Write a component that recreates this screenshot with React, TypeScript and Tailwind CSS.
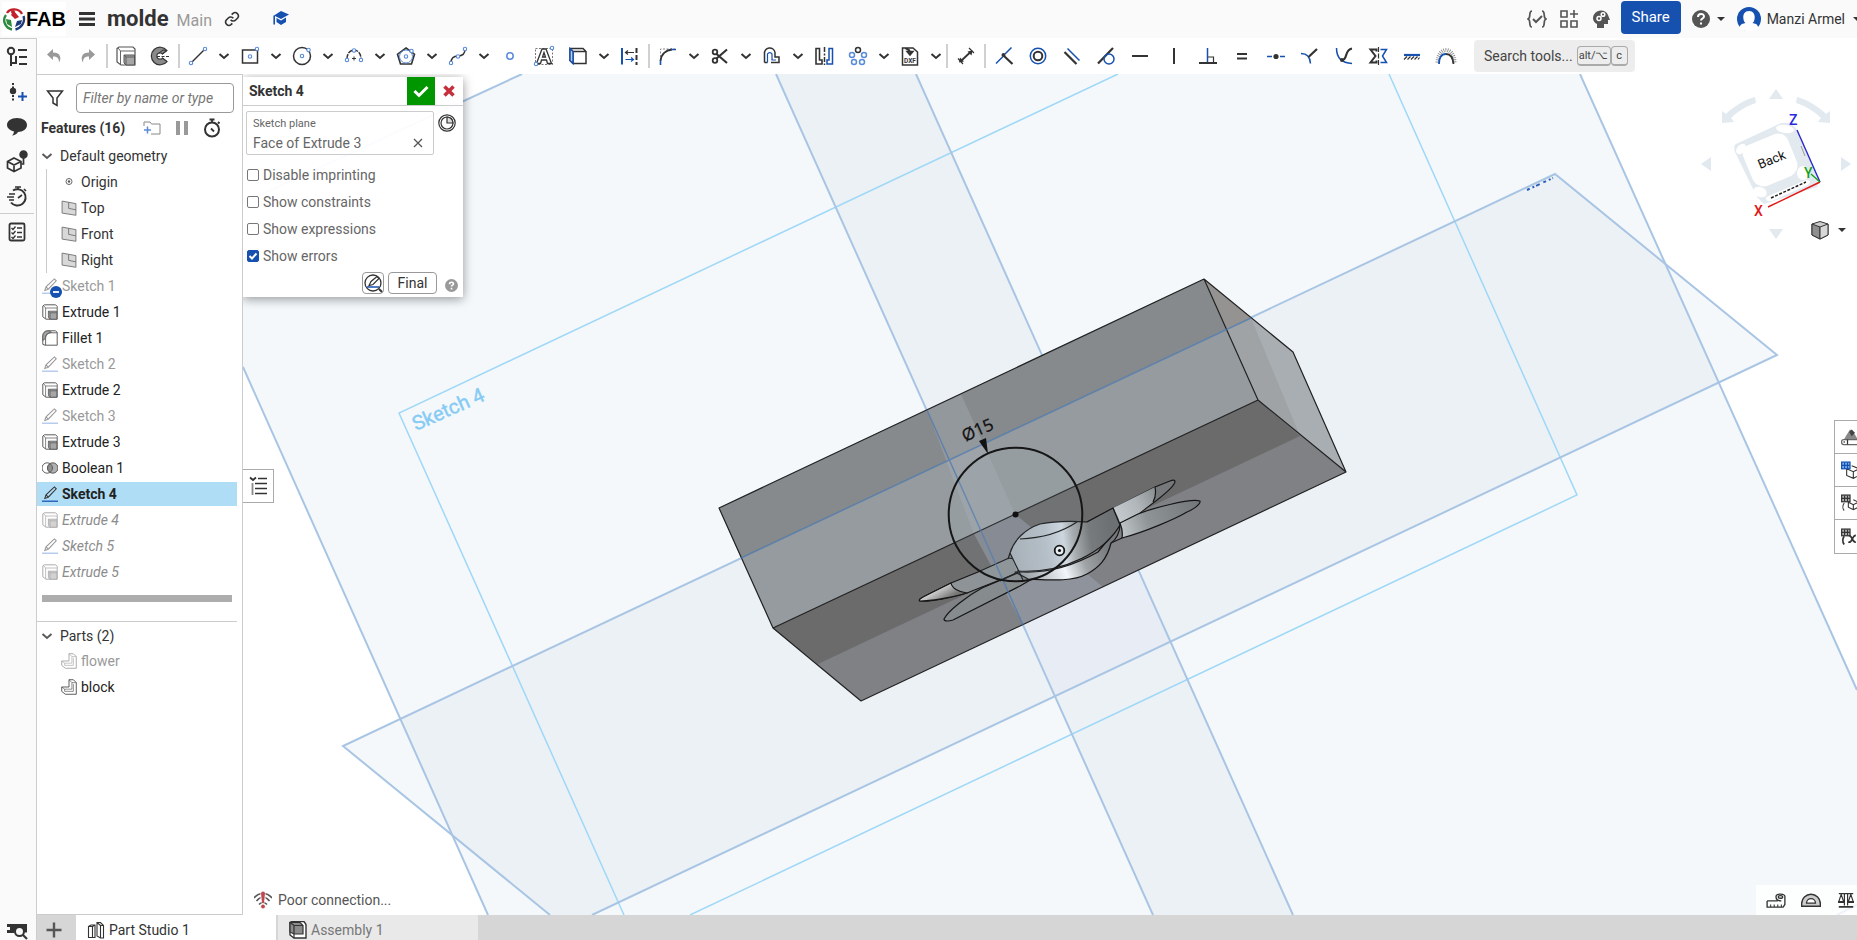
import React from 'react';

type IconProps = { children: React.ReactNode; className?: string; box?: string };

function Icon({ children, className = 'size-6', box = '0 0 24 24' }: IconProps) {
  return (
    <svg viewBox={box} className={`shrink-0 ${className}`} fill="none" stroke="#333" strokeWidth="1.5" aria-hidden="true">
      {children}
    </svg>
  );
}

const BLUE = '#1651b0';
const SOFT = '#5a8bd8';

/* ---------- feature glyphs ---------- */

function ExtrudeGlyph() {
  return (
    <g stroke="#555">
      <path d="M3 4.500 5 3h14l2 2v16H7l-4-3z" fill="#fff" strokeWidth="1.200" />
      <path d="M6.500 20.500V7h14M6.500 7 4 4" strokeWidth="0.900" />
      <path d="M10 11h10.500v10H12l-2-2z" fill="#a6a6a6" strokeWidth="1" />
      <path d="M10 11l2 2h8.500M12 13v8" strokeWidth="0.900" />
    </g>
  );
}

function PencilGlyph({ line = '#a9c3e6' }: { line?: string }) {
  return (
    <>
      <path d="M5.500 17.500 7 13 17.500 3.200l2.300 2.300L9.800 16z M7 13l2.800 3" strokeWidth="1.300" />
      <path d="M2 21h20" stroke={line} strokeWidth="1.600" />
    </>
  );
}

function FilletGlyph() {
  return (
    <g stroke="#555">
      <path d="M3 20V9c0-3 2-6 6-6h10l2 2v16H6z" fill="#fff" strokeWidth="1.200" />
      <path d="M3 11c0-5 3-8 8-8l3 2c-5 0-8 3-8 8l-3 2z" fill="#a6a6a6" strokeWidth="1" />
      <path d="M6.500 21v-8c0-5 3-7.500 7.500-7.500h7" strokeWidth="1.100" />
    </g>
  );
}

function BooleanGlyph() {
  return (
    <g stroke="#555">
      <circle cx="8.500" cy="12" r="6.500" strokeWidth="1.200" />
      <circle cx="15.500" cy="12" r="6.500" fill="#b0b0b0" strokeWidth="1.200" />
      <path d="M12 6.500a6.500 6.500 0 0 1 0 11 6.500 6.500 0 0 1 0-11z" fill="#909090" strokeWidth="1.200" />
    </g>
  );
}

function PlaneGlyph() {
  return (
    <>
      <path d="M2 2.500 21 6v16L2 19z" fill="#d8d8d8" stroke="#777" strokeWidth="1.300" />
      <path d="M11 4v8.500l10 2" stroke="#777" strokeWidth="1.300" />
    </>
  );
}

function PartGlyph() {
  return (
    <g stroke="#555">
      <path d="M12 2h6l4 4v16H7l-5-4v-6h10z" fill="#fff" strokeWidth="1.300" />
      <path d="M12 2l4 4h6M16 6v9H6l-4-3M6 15v3h12V8" strokeWidth="0.900" />
    </g>
  );
}

/* ---------- toolbar ---------- */

type Tool = { name: string; glyph?: React.ReactNode; menu?: boolean; sep?: boolean };

const pt = (x: number, y: number, c = SOFT) => <circle cx={x} cy={y} r="1.7" stroke={c} strokeWidth="1.1" fill="#fff" />;

const tools: Tool[] = [
  { name: 'Undo', glyph: <path d="M11 5 5 10.500 11 16v-3.500c4 0 6 1.500 6 6 3-5 1-10-6-10z" fill="#999" stroke="none" /> },
  { name: 'Redo', glyph: <path d="M13 5l6 5.500L13 16v-3.500c-4 0-6 1.500-6 6-3-5-1-10 6-10z" fill="#999" stroke="none" /> },
  { name: 's1', sep: true },
  { name: 'Extrude', glyph: <ExtrudeGlyph /> },
  {
    name: 'Revolve',
    glyph: (
      <>
        <path d="M19 6.500A8.800 8.800 0 1 0 19 17.500L14.500 14a3.200 3.200 0 1 1 0-4z" fill="#8a8a8a" strokeWidth="1.200" />
        <path d="M19 6.500 15 6l-4 3M14.500 10 19 6.500M14.500 14l4.500 3.500" strokeWidth="1" />
        <path d="M9 12.500h13" strokeDasharray="3 1.500" strokeWidth="1.200" />
      </>
    ),
  },
  { name: 's2', sep: true },
  { name: 'Line', menu: true, glyph: <><path d="M5 19 19 5" />{pt(5, 19)}{pt(19, 5)}</> },
  { name: 'Rectangle', menu: true, glyph: <><path d="M4.500 6h15v13h-15z" />{pt(19, 5)}{pt(12, 12.500)}</> },
  { name: 'Circle', menu: true, glyph: <><circle cx="12" cy="12" r="8.500" />{pt(18.500, 6)}{pt(12, 12)}</> },
  { name: 'Arc', menu: true, glyph: <><path d="M5 15C5 3 19 3 19 15" strokeDasharray="5 1" />{pt(5, 16)}{pt(19, 16)}{pt(12, 6.500)}<path d="M12 12.500v4M10 14.500h4" strokeWidth="1" /></> },
  { name: 'Polygon', menu: true, glyph: <><path d="M12 4l8.500 6.200L17.500 20h-11L3.500 10.200z" strokeWidth="1.600" /><circle cx="12" cy="12.500" r="6.500" stroke={SOFT} strokeWidth="1" />{pt(12, 12.500)}{pt(17.500, 7)}</> },
  { name: 'Spline', menu: true, glyph: <><path d="M5 19c0-6 4-7 7-7s7-1 7-7" />{pt(5, 19)}{pt(12, 12.500)}{pt(19, 5)}</> },
  { name: 'Point', glyph: <circle cx="12" cy="12" r="3.200" stroke={SOFT} /> },
  {
    name: 'Text',
    glyph: (
      <>
        <path d="M3.500 4.500h17v16h-17z" strokeDasharray="2 1.500" strokeWidth="1" stroke="#777" />
        <path d="M4.500 19.500 10 5h4l5.500 14.500h-4l-1-3.500h-5l-1 3.500zM10.500 13h3L12 8.500z" fill="#fff" strokeWidth="1.300" />
        {pt(4, 20)}{pt(20, 4)}
      </>
    ),
  },
  { name: 'Use', menu: true, glyph: <><path d="M4 4.500h13l3 3v12H7l-3-3zM4 4.500l3 3h13M7 7.500v12" /><path d="M4 4.500l3 3v12l-3-3z" fill="#b9cff0" stroke={BLUE} /></> },
  { name: 'Construction', glyph: <><path d="M4 4v16.500" stroke={BLUE} strokeWidth="2" /><path d="M18.500 4v17" strokeWidth="2" strokeDasharray="5 2" /><path d="M8 8.500h8M10 6.500l-2.500 2 2.500 2" strokeWidth="1.200" /><path d="M7.500 15.500H15M13 13.500l2.500 2-2.500 2" stroke={BLUE} strokeWidth="1.200" /></> },
  { name: 's3', sep: true },
  { name: 'Fillet', menu: true, glyph: <><path d="M4.500 20V5H19" stroke="#888" strokeWidth="1" strokeDasharray="2 1.500" /><path d="M4.500 17C5 10 10 6 16 5.500" strokeWidth="1.800" /><path d="M4.500 16.500V21M15 5.500h5" stroke={BLUE} strokeWidth="1.600" /></> },
  { name: 'Trim', menu: true, glyph: <><circle cx="7" cy="8" r="2.300" strokeWidth="1.800" /><circle cx="7" cy="16.500" r="2.300" strokeWidth="1.800" /><path d="M8.500 10 19 19M8.500 14.500 19 5.500" strokeWidth="2.200" /></> },
  { name: 'Offset', menu: true, glyph: <><path d="M4.500 18.500V10a5 5 0 0 1 10.500-1.500V13h4v5.500H11M4.500 18.500h3" /><path d="M7.500 18.500V10a2.500 2.500 0 0 1 4.500 0V16h4" stroke={BLUE} strokeWidth="1.200" /></> },
  { name: 'Mirror', glyph: <><path d="M4 4.500h3.500V16H10v4H4z" strokeWidth="1.600" /><path d="M12.500 3v18" strokeDasharray="5 1.500 2 1.500" /><path d="M20.500 4.500H17V16h-2v4h5.500z" stroke={BLUE} /></> },
  { name: 'Pattern', menu: true, glyph: <><circle cx="12" cy="6" r="2.500" /><g stroke={SOFT}><circle cx="6" cy="11" r="2.500" /><circle cx="18" cy="11" r="2.500" /><circle cx="8" cy="18" r="2.500" /><circle cx="16" cy="18" r="2.500" /></g></> },
  {
    name: 'Insert DXF',
    menu: true,
    glyph: (
      <>
        <path d="M4.500 4H15l4.500 4v13h-15z" />
        <path d="M7 4.500c4 0 5 1 5 4M9 7.500l3 3.500 3-3.500z" fill="#333" />
        <text x="12" y="19" textAnchor="middle" fontSize="6.500" fontWeight="700" fontFamily="Roboto, sans-serif" fill="#333" stroke="none">DXF</text>
      </>
    ),
  },
  { name: 's4', sep: true },
  { name: 'Dimension', glyph: <><path d="M7 17 16.500 8" strokeWidth="1.800" /><path d="M5 18.500l1-5 4 4zM18.500 6.500l-5 1 4 4z" fill="#333" stroke="none" /><path d="M4 14.500 9 20M15 4l5 5" strokeWidth="1.200" /></> },
  { name: 's5', sep: true },
  { name: 'Coincident', glyph: <><path d="M4 19.500l7-7M13 10l6.500-6.500" stroke={BLUE} /><path d="M11.500 11.500 20.500 20" strokeWidth="2.200" /><circle cx="11.500" cy="11" r="2" fill="#333" stroke="none" /></> },
  { name: 'Concentric', glyph: <><circle cx="12" cy="12" r="7.700" stroke={BLUE} /><circle cx="12" cy="12" r="4.300" strokeWidth="2" /></> },
  { name: 'Parallel', glyph: <><path d="M4.500 8l12 12" strokeWidth="2.200" /><path d="M7.500 4.500l12 12" stroke={BLUE} /></> },
  { name: 'Tangent', glyph: <><path d="M4 19.500 19 4" strokeWidth="2.200" /><circle cx="15" cy="15" r="5" stroke={BLUE} /></> },
  { name: 'Horizontal', glyph: <path d="M4 12h16" strokeWidth="2" /> },
  { name: 'Vertical', glyph: <path d="M12 4v16" strokeWidth="2" /> },
  { name: 'Perpendicular', glyph: <><path d="M11.500 4v14" stroke={BLUE} /><path d="M3 19h18" strokeWidth="2" /><path d="M12 13h5.500v5.500" strokeWidth="1.200" /></> },
  { name: 'Equal', glyph: <path d="M7 10h10M7 14.500h10" strokeWidth="2" /> },
  { name: 'Midpoint', glyph: <><path d="M3 12.500h5M16 12.500h5" stroke={BLUE} /><circle cx="12" cy="12.500" r="2.600" fill="#333" stroke="none" /></> },
  { name: 'Normal', glyph: <><path d="M3 9.500c5 0 9 2 9.500 10" stroke={BLUE} /><path d="M10.500 13 19 5" strokeWidth="2.200" /></> },
  { name: 'Pierce', glyph: <><path d="M4.500 4c0 9 5 15 15.500 15.500" stroke={BLUE} /><path d="M10 16c6 0 2-10 10-11.500" strokeWidth="2.200" /><circle cx="10" cy="16" r="2" fill="#333" stroke="none" /></> },
  { name: 'Symmetric', glyph: <><path d="M10.500 7.500v-2H4.500L9.500 12l-5 6.500h6v-2" strokeWidth="2" /><path d="M12.500 3v18" strokeDasharray="5 1.500" strokeWidth="1.200" /><path d="M14.500 5.500h6L16.500 12l4 6.500h-6" stroke={BLUE} /></> },
  { name: 'Fix', glyph: <><path d="M4 11h16" stroke={BLUE} strokeWidth="2.200" /><path d="M4 15.500l3-3M7.500 15.500l3-3M11 15.500l3-3M14.500 15.500l3-3M18 15.500l1.500-2" strokeWidth="1.200" /></> },
  { name: 'Curvature', glyph: <><path d="M3.500 18.500C4 2 20 2 20.500 18.500" stroke="#888" strokeWidth="4" strokeDasharray="0.800 1.200" /><path d="M5 20C5 14 7 10 12 10" stroke={BLUE} strokeWidth="1.800" /><path d="M12 10c5 0 7 4 7.500 10" strokeWidth="1.800" /></> },
];

function Chevron({ className = 'w-3 h-3' }: { className?: string }) {
  return (
    <Icon box="0 0 12 12" className={className}>
      <path d="M1.500 4 6 8l4.500-4" strokeWidth="2" />
    </Icon>
  );
}

function Toolbar() {
  return (
    <div className="flex h-9 items-center bg-white" role="toolbar">
      {tools.map((t) =>
        t.sep ? (
          <div key={t.name} className="flex w-1 shrink-0 justify-center">
            <div className="h-6 w-0.5 bg-[#d0d0d0]" />
          </div>
        ) : (
          <div key={t.name} className="flex shrink-0 items-center">
            <button aria-label={t.name} className="flex w-[34px] justify-center">
              <Icon>{t.glyph}</Icon>
            </button>
            {t.menu && (
              <button aria-label={`${t.name} options`} className="flex w-[18px] justify-center">
                <Chevron />
              </button>
            )}
          </div>
        ),
      )}
      <button className="ml-[11px] flex h-8 w-[161px] shrink-0 items-center rounded bg-[#ededed] pl-2.5 text-sm text-[#444]">
        Search tools...
        <kbd className="ml-1 flex h-5 w-[34px] items-center justify-center rounded-sm border border-b-2 border-[#aaa] font-[Roboto,sans-serif] text-[11px]">alt/⌥</kbd>
        <kbd className="flex h-5 w-[17px] items-center justify-center rounded-sm border border-b-2 border-[#aaa] font-[Roboto,sans-serif] text-[11px]">c</kbd>
      </button>
    </div>
  );
}

/* ---------- header ---------- */

function Header() {
  return (
    <header className="flex h-[38px] shrink-0 items-center bg-[#fafafa] text-[#333]">
      <div className="ml-0.5 flex h-[34px] w-16 items-center bg-white">
        <Icon className="size-6" box="0 0 24 24">
          <path d="M5 6C8 1 17 1 20 7" stroke="#c4202b" strokeWidth="2.400" />
          <path d="M9 8l3-4 5 6-4 2z" fill="#c4202b" stroke="none" />
          <circle cx="11" cy="5" r="2" fill="#c4202b" stroke="none" />
          <path d="M4 8C0 13 3 21 10 22.500" stroke="#2c8a3d" strokeWidth="2.400" />
          <path d="M4 12l5 1 1 7-5-3z" fill="#2c8a3d" stroke="none" />
          <path d="M21.500 9c2 6-2 12-8 13.500" stroke="#1d3a7a" strokeWidth="2.400" />
          <path d="M20 13l-5 1-2 6 6-3z" fill="#1d3a7a" stroke="none" />
        </Icon>
        <span className="font-['Liberation_Sans',sans-serif] text-[20px] leading-none font-bold text-black">FAB</span>
      </div>
      <button aria-label="Menu" className="ml-[13px] flex">
        <Icon className="h-4 w-4" box="0 0 16 16">
          <path d="M0 2.500h16M0 8h16M0 13.500h16" strokeWidth="3" />
        </Icon>
      </button>
      <h1 className="ml-3 text-[22px] leading-6 font-bold">molde</h1>
      <span className="ml-2 pt-1 text-base text-[#999]">Main</span>
      <button aria-label="Copy link" className="ml-3 flex">
        <Icon className="size-4" box="0 0 24 24">
          <path d="M10 13a5 5 0 0 0 7.500.5l3-3a5 5 0 0 0-7-7l-2 2M14 11a5 5 0 0 0-7.500-.5l-3 3a5 5 0 0 0 7 7l2-2" strokeWidth="2.400" />
        </Icon>
      </button>
      <button aria-label="Learning center" className="ml-[33px] flex">
        <Icon className="h-4 w-4" box="0 0 16 16">
          <path d="M8 0l8 3.500L8 8 1 4.500z" fill={BLUE} stroke="none" />
          <path d="M3.500 7 8 9.500 13 6.500V11l-5 3-4.500-3z" fill={BLUE} stroke="none" />
          <path d="M1.200 4.500v9" stroke={BLUE} strokeWidth="1.600" />
        </Icon>
      </button>
      <div className="ml-auto flex items-center">
        <button aria-label="Release candidates" className="mr-3 flex">
          <Icon className="size-5" box="0 0 20 20">
            <path d="M5 2C1 2 4.500 9 1 10c3.500 1 0 8 4 8M15 2c4 0 .5 7 4 8-3.500 1 0 8-4 8" stroke="#555" strokeWidth="1.700" />
            <path d="M6 10l3 3 6-6" stroke="#555" strokeWidth="2" />
          </Icon>
        </button>
        <button aria-label="Apps" className="mr-3 flex">
          <Icon className="size-5" box="0 0 20 20">
            <path d="M2 2h6v6H2zM2 12h6v6H2zM12 12h6v6h-6zM11 5h8M15 1v8" stroke="#555" strokeWidth="1.600" />
          </Icon>
        </button>
        <button aria-label="AI advisor" className="mr-2.5 flex">
          <Icon className="size-5" box="0 0 20 20">
            <path d="M6 19v-4C2 13 1 9 3 5.500 6 0 15 0 17 6l2 5h-2v4h-4v4z" fill="#555" stroke="none" />
            <circle cx="8" cy="9.500" r="2" stroke="#fff" />
            <circle cx="12" cy="5.500" r="1.800" stroke="#fff" />
          </Icon>
        </button>
        <button className="mb-1 h-[33px] w-[60px] rounded bg-[#1651b0] text-[15px] text-white">Share</button>
        <button aria-label="Help" className="ml-2.5 flex items-center">
          <Icon className="size-5" box="0 0 20 20">
            <circle cx="10" cy="10" r="9" fill="#555" stroke="none" />
            <path d="M7 8c0-4 6-4 6-.5 0 2-3 2-3 4M10 13.500v2" stroke="#fff" strokeWidth="2" />
          </Icon>
          <Icon className="ml-1.5 h-2 w-2" box="0 0 8 8">
            <path d="M0 2h8L4 6z" fill="#333" stroke="none" />
          </Icon>
        </button>
        <button className="ml-3 flex items-center text-sm">
          <Icon className="size-6" box="0 0 24 24">
            <circle cx="12" cy="12" r="12" fill={BLUE} stroke="none" />
            <path d="M12 4c8 0 6 11 3.500 12 5 1 5 2 6 5.500A12 12 0 0 1 12 24a12 12 0 0 1-9.500-3C3.500 18 3.500 17 8.500 16 6 15 4 4 12 4z" fill="#fff" stroke="none" />
          </Icon>
          <span className="ml-1.5 whitespace-nowrap">Manzi Armel</span>
          <Icon className="ml-2 h-2 w-1" box="0 0 4 8">
            <path d="M0 2h8L4 6z" fill="#333" stroke="none" />
          </Icon>
        </button>
      </div>
    </header>
  );
}

/* ---------- left rail ---------- */

function Rail() {
  return (
    <nav className="flex w-[37px] shrink-0 flex-col items-center border-t border-r border-[#ccc] bg-[#fafafa] pr-0.5">
      <div className="flex flex-col items-center gap-[11px] pt-1.5 pb-1">
        <button aria-label="Feature list" className="flex">
          <Icon><circle cx="6" cy="6" r="3.200" strokeWidth="2" /><path d="M6 9v12M6 18h5v-7M13 5h9M14 12h8M14 19h8" strokeWidth="2" /></Icon>
        </button>
        <button aria-label="Insert version" className="flex">
          <Icon><circle cx="8" cy="11" r="3.200" fill="#333" stroke="none" /><path d="M8 3v5M8 15v6" strokeWidth="2" strokeDasharray="2 1.500" /><path d="M13 16.500h9M17.500 12v9" stroke={BLUE} strokeWidth="2" /></Icon>
        </button>
        <button aria-label="Comments" className="flex">
          <Icon><path d="M12 3c6 0 10 3 10 7s-4 7-9 7c-1 2-4 3.500-6 3.500 1-1 2-2.500 2-4-4-1-7-3.500-7-6.500 0-4 4-7 10-7z" fill="#333" stroke="none" /></Icon>
        </button>
        <button aria-label="Custom tables" className="flex">
          <Icon><path d="M9 8l7 3.500V18l-7 3.500L2.500 18v-6.500zM2.500 11.500 9 15l7-3.500M9 15v6" strokeWidth="1.700" /><circle cx="18.500" cy="4.500" r="3.500" fill="#333" /><path d="M18.500 8v6h-2" strokeWidth="1.700" /></Icon>
        </button>
        <button aria-label="Performance" className="flex">
          <Icon><path d="M8 5.500a8.200 8.200 0 1 1-2 12" strokeWidth="2" /><path d="M10 2h6M13 2v3M19 4l2 2M13 13l4-3M4 9h6M2 12h7M4 15h5" strokeWidth="1.600" /></Icon>
        </button>
      </div>
      <div className="mb-1.5 h-px w-full bg-[#ccc]" />
      <button aria-label="Checklist" className="flex">
        <Icon><rect x="4.500" y="3.500" width="15" height="17" rx="1.500" strokeWidth="1.800" /><path d="M12 8h5M12 12.500h5M12 17h5M6.500 8 8 9.500 10.500 6.500M6.500 12.500 8 14l2.500-3M6.500 17 8 18.500l2.500-3" strokeWidth="1.300" /></Icon>
      </button>
      <button aria-label="Search in tabs" className="mt-auto mb-[-3px] flex">
        <Icon><path d="M2 5h20v8.500h-2.500a6 6 0 0 0-10.500-.5 6 6 0 0 0 .5 1H2v-3h3V8H2z" fill="#333" stroke="none" /><circle cx="14.500" cy="12.500" r="4.500" fill="#fafafa" strokeWidth="2" /><path d="M18 16l4 4" strokeWidth="2.200" /></Icon>
      </button>
    </nav>
  );
}

/* ---------- feature tree ---------- */

type Row = { label: string; kind: 'sketch' | 'extrude' | 'fillet' | 'boolean'; state?: 'hidden' | 'active' | 'rolled'; badge?: boolean };

const rows: Row[] = [
  { label: 'Sketch 1', kind: 'sketch', state: 'hidden', badge: true },
  { label: 'Extrude 1', kind: 'extrude' },
  { label: 'Fillet 1', kind: 'fillet' },
  { label: 'Sketch 2', kind: 'sketch', state: 'hidden' },
  { label: 'Extrude 2', kind: 'extrude' },
  { label: 'Sketch 3', kind: 'sketch', state: 'hidden' },
  { label: 'Extrude 3', kind: 'extrude' },
  { label: 'Boolean 1', kind: 'boolean' },
  { label: 'Sketch 4', kind: 'sketch', state: 'active' },
  { label: 'Extrude 4', kind: 'extrude', state: 'rolled' },
  { label: 'Sketch 5', kind: 'sketch', state: 'rolled' },
  { label: 'Extrude 5', kind: 'extrude', state: 'rolled' },
];

const rowTone = {
  normal: 'text-[#222]',
  hidden: 'text-[#999]',
  active: 'bg-[#b0ddf6] font-bold text-[#222]',
  rolled: 'italic text-[#8c8c8c]',
};

function FeatureRow({ row }: { row: Row }) {
  const faded = row.state === 'hidden' || row.state === 'rolled';
  return (
    <li className={`mr-[5px] flex h-6 items-center pl-[5px] ${rowTone[row.state ?? 'normal']}`}>
      <span className="relative flex">
        <Icon className={faded ? 'h-4 w-4 opacity-50' : 'h-4 w-4'} box="2 2 20 20">
          {row.kind === 'sketch' && <PencilGlyph line={row.state === 'active' ? BLUE : '#5a8bd8'} />}
          {row.kind === 'extrude' && <ExtrudeGlyph />}
          {row.kind === 'fillet' && <FilletGlyph />}
          {row.kind === 'boolean' && <BooleanGlyph />}
        </Icon>
        {row.badge && (
          <Icon className="absolute -right-1 -bottom-1 size-3" box="0 0 12 12">
            <circle cx="6" cy="6" r="6" fill={BLUE} stroke="none" />
            <path d="M3 6h6" stroke="#fff" strokeWidth="1.800" />
          </Icon>
        )}
      </span>
      <span className="ml-1">{row.label}</span>
    </li>
  );
}

function FeaturePanel() {
  return (
    <aside className="flex w-[206px] shrink-0 flex-col border-t border-r border-b border-[#ccc] bg-white text-sm text-[#333]">
      <div className="flex items-center pt-2">
        <button aria-label="Filter" className="ml-[9px] flex">
          <Icon className="h-[18px] w-[18px]" box="0 0 18 18"><path d="M1.500 2h15l-5.500 7v7.500L7 14V9z" /></Icon>
        </button>
        <input
          aria-label="Filter by name or type"
          placeholder="Filter by name or type"
          className="ml-3 h-[30px] w-[158px] rounded border border-[#999] px-1.5 text-sm italic placeholder:text-[#777]"
        />
      </div>
      <div className="flex h-[30px] items-center pl-1">
        <h2 className="w-[101px] text-sm font-bold">Features (16)</h2>
        <button aria-label="New folder" className="flex">
          <Icon className="h-4 w-5" box="0 0 20 16"><path d="M2 6V2h6l1.500 2H18v10H9" stroke="#888" strokeWidth="1" /><path d="M2 10h7M5.500 6.500v7" stroke={SOFT} /></Icon>
        </button>
        <button aria-label="Pause" className="ml-3 flex">
          <Icon className="h-4 w-4" box="0 0 16 16"><path d="M4 1v14M12 1v14" stroke="#999" strokeWidth="4" /></Icon>
        </button>
        <button aria-label="Regeneration times" className="ml-3 flex">
          <Icon className="size-5" box="0 0 20 20"><circle cx="10" cy="11.500" r="7" strokeWidth="2" /><path d="M7.500 1.500h5M10 2v3M16 4l1.500 1.500M9 10.500l3 3" strokeWidth="1.800" /></Icon>
        </button>
      </div>
      <div>
        <button className="flex h-[26px] items-center pl-1">
          <Chevron className="h-3 w-3 opacity-80" />
          <span className="ml-[7px]">Default geometry</span>
        </button>
        <ul className="ml-[9px] border-l border-[#ccc] pl-3.5">
          <li className="flex h-[26px] items-center">
            <Icon className="h-4 w-4" box="0 0 16 16"><circle cx="8" cy="7.500" r="3" stroke="#666" strokeWidth="1" /><circle cx="8" cy="7.500" r="1.200" fill="#555" stroke="none" /></Icon>
            <span className="ml-1">Origin</span>
          </li>
          {['Top', 'Front', 'Right'].map((name) => (
            <li key={name} className="flex h-[26px] items-center">
              <Icon className="h-4 w-4" box="1 1 21 22"><PlaneGlyph /></Icon>
              <span className="ml-1">{name}</span>
            </li>
          ))}
        </ul>
      </div>
      <ul className="flex flex-col gap-0.5 pt-px">
        {rows.map((r) => <FeatureRow key={r.label} row={r} />)}
      </ul>
      <div className="mt-[11px] ml-[5px] h-[7px] w-[190px] bg-[#adadad]" />
      <div className="mt-[19px] mr-[5px] border-t border-[#ccc]">
        <button className="flex h-[27px] items-center pl-1">
          <Chevron className="h-3 w-3 opacity-80" />
          <span className="ml-[7px]">Parts (2)</span>
        </button>
        <ul className="flex flex-col gap-0.5 pl-6">
          <li className="flex h-6 items-center text-[#999]">
            <Icon className="h-4 w-4 opacity-50" box="1 1 22 22"><PartGlyph /></Icon>
            <span className="ml-1">flower</span>
          </li>
          <li className="flex h-6 items-center text-[#222]">
            <Icon className="h-4 w-4" box="1 1 22 22"><PartGlyph /></Icon>
            <span className="ml-1">block</span>
          </li>
        </ul>
      </div>
    </aside>
  );
}

/* ---------- sketch dialog ---------- */

function Option({ id, label, checked }: { id: string; label: string; checked?: boolean }) {
  return (
    <div className="flex h-[27px] items-center">
      <span className="relative flex">
        <input id={id} type="checkbox" defaultChecked={checked} className="peer size-3 appearance-none rounded-[2px] border border-[#777] bg-white checked:border-[#1651b0] checked:bg-[#1651b0]" />
        <svg viewBox="0 0 12 12" className="pointer-events-none absolute inset-0 hidden size-3 peer-checked:block" fill="none" stroke="#fff" strokeWidth="2">
          <path d="M2.500 6 5 8.500 9.500 3.500" />
        </svg>
      </span>
      <label htmlFor={id} className="ml-1">{label}</label>
    </div>
  );
}

function SketchDialog() {
  return (
    <section className="absolute top-[3px] left-0 w-[220px] bg-white/95 text-sm text-[#666] shadow-[0_2px_10px_rgba(0,0,0,0.4)]">
      <div className="flex h-[29px] items-center border-b border-[#ccc] pl-1.5">
        <h2 className="grow font-bold text-[#333]">Sketch 4</h2>
        <button aria-label="Accept" className="flex size-7 items-center justify-center bg-[#009600]">
          <Icon className="size-4" box="0 0 16 16"><path d="M1.500 8 6 12.500 14.500 4" stroke="#fff" strokeWidth="3" /></Icon>
        </button>
        <button aria-label="Cancel" className="flex size-7 items-center justify-center">
          <Icon className="size-3" box="0 0 12 12"><path d="M1.500 1.500l9 9M10.500 1.500l-9 9" stroke="#c4303c" strokeWidth="3.500" /></Icon>
        </button>
      </div>
      <div className="flex items-start pt-[5px] pl-[3px]">
        <div className="flex h-11 w-[188px] flex-col rounded-[2px] border border-[#ccc] pt-1 pr-2.5 pl-1.5">
          <span className="text-[11px] leading-4">Sketch plane</span>
          <div className="flex items-center justify-between leading-[22px]">
            <span>Face of Extrude 3</span>
            <button aria-label="Clear sketch plane" className="flex">
              <Icon className="size-2.5" box="0 0 10 10"><path d="M1 1l8 8M9 1 1 9" stroke="#555" strokeWidth="1.300" /></Icon>
            </button>
          </div>
        </div>
        <button aria-label="Final state" className="mt-[3px] ml-1 flex">
          <Icon className="size-[18px]" box="0 0 18 18"><circle cx="9" cy="9" r="8.200" strokeWidth="1.200" /><circle cx="9" cy="9" r="6" fill="#fff" strokeWidth="1.200" /><path d="M9 3a6 6 0 0 1 6 6H9z" fill="#ddd" strokeWidth="1.200" /></Icon>
        </button>
      </div>
      <div className="pt-1.5 pl-1">
        <Option id="imprint" label="Disable imprinting" />
        <Option id="constraints" label="Show constraints" />
        <Option id="expressions" label="Show expressions" />
        <Option id="errors" label="Show errors" checked />
      </div>
      <div className="flex h-7 items-start justify-end gap-1 pt-[3px] pr-[5px]">
        <button aria-label="Sketch preview" className="flex size-[22px] items-center justify-center rounded border border-[#999] bg-white">
          <Icon className="size-5" box="0 0 20 20"><circle cx="10" cy="10" r="8" strokeWidth="1.300" /><path d="M6 12.500 8 8.500l6-5 2 2-6 6z" strokeWidth="1.200" /><path d="M4 14h12" stroke={BLUE} /><path d="M16 16l3 3" strokeWidth="2" /></Icon>
        </button>
        <button className="h-[22px] w-[49px] rounded border border-[#999] bg-white text-[#333]">Final</button>
        <button aria-label="Dialog help" className="mt-[7px] ml-1 flex">
          <Icon className="size-[13px]" box="0 0 20 20"><circle cx="10" cy="10" r="10" fill="#999" stroke="none" /><path d="M7 8c0-4 6-4 6-.5 0 2-3 2-3 4M10 13.500v2.500" stroke="#fff" strokeWidth="2.500" /></Icon>
        </button>
      </div>
    </section>
  );
}

/* ---------- 3D scene ---------- */

const PLANE_A = 'M243 203 522 74H1580L1857 690V905L1837 915H488L243 367z';
const PLANE_B = 'M343 746 1555 174 1777 355 592 915H550z';
const PLANE_C = 'M776 74h140l377 841h-140z';

function Scene() {
  const edge = '#161616';
  return (
    <svg viewBox="243 74 1614 841" preserveAspectRatio="xMidYMid slice" className="absolute inset-0 h-full w-full">
      <defs>
        <clipPath id="clipA"><path d={PLANE_A} /></clipPath>
        <clipPath id="clipB"><path d={PLANE_B} /></clipPath>
        <linearGradient id="bore" x1="1010" y1="545" x2="1112" y2="530" gradientUnits="userSpaceOnUse">
          <stop offset="0" stopColor="#a9b1b8" />
          <stop offset="0.350" stopColor="#b9c2ca" />
          <stop offset="0.520" stopColor="#d3dbe3" />
          <stop offset="0.620" stopColor="#a7acaf" />
          <stop offset="0.780" stopColor="#777b7e" />
          <stop offset="1" stopColor="#6c7073" />
        </linearGradient>
        <linearGradient id="boreLow" x1="1020" y1="580" x2="1108" y2="545" gradientUnits="userSpaceOnUse">
          <stop offset="0" stopColor="#90969b" />
          <stop offset="0.480" stopColor="#f2f6fa" />
          <stop offset="0.700" stopColor="#9fa3a5" />
          <stop offset="1" stopColor="#75787a" />
        </linearGradient>
        <linearGradient id="petalR" x1="1118" y1="515" x2="1157" y2="495" gradientUnits="userSpaceOnUse">
          <stop offset="0" stopColor="#c2c8cb" />
          <stop offset="0.500" stopColor="#b0b6b9" />
          <stop offset="1" stopColor="#8b9093" />
        </linearGradient>
        <linearGradient id="petalR2" x1="1122" y1="532" x2="1196" y2="502" gradientUnits="userSpaceOnUse">
          <stop offset="0" stopColor="#c0c5c8" />
          <stop offset="0.350" stopColor="#8f9497" />
          <stop offset="1" stopColor="#74787b" />
        </linearGradient>
        <linearGradient id="petalL" x1="938" y1="588" x2="945" y2="600" gradientUnits="userSpaceOnUse">
          <stop offset="0" stopColor="#d8d8d8" />
          <stop offset="1" stopColor="#777" />
        </linearGradient>
      </defs>

      <path d={PLANE_A} fill="#f4f8fb" />
      <path d={PLANE_B} fill="#f4f8fb" />
      <g clipPath="url(#clipA)" fill="#ecf1f5">
        <path d={PLANE_B} />
        <path d={PLANE_C} />
      </g>
      <path d={PLANE_C} fill="#e8ecf4" clipPath="url(#clipB)" />

      <path d="M1118 74 399 413 624 915M1389 74 1577 495 690 915" fill="none" stroke="#9fd8f7" strokeWidth="1.500" />
      <g fill="none" stroke="#a9c5e4" strokeWidth="2">
        <path d="M243 203 522 74M1580 74 1857 690M243 367 488 915M1837 915 1857 905" />
        <path d="M550 915 343 746 1555 174 1777 355 592 915" />
        <path d="M776 74 1153 915M916 74 1293 915" />
      </g>
      <path d="M1527 190 1553 178" stroke="#2b5dbb" strokeWidth="2" strokeDasharray="3 3 2 2 4 4" />

      <text transform="translate(416 431) rotate(-24)" fontFamily="Roboto, sans-serif" fontSize="20" fill="#86cbf4" stroke="#86cbf4" strokeWidth="0.400">Sketch 4</text>

      {/* block faces */}
      <path d="M719 508 1204 279 1258 400 773 628z" fill="#959b9f" />
      <path d="M719 508 1204 279 1226 329 741 558z" fill="#868a8c" />
      <path d="M927 410 961 394 1015 514 974 534z" fill="#abb1ba" fillOpacity="0.350" />
      <path d="M1204 279 1293 352 1346 472 1258 400z" fill="#9fa3a5" />
      <path d="M1204 279 1251 318 1226 329z" fill="#949391" />
      <path d="M1251 318 1293 352 1346 472 1300 436z" fill="#a8aeb1" />
      <path d="M773 628 1258 400 1346 472 861 701z" fill="#7f8185" />
      <path d="M773 628 1258 400 1300 436 818 664z" fill="#6b6b6c" />
      <path d="M974 534 1015 514 1103 587 1023 625z" fill="#9fa6b4" fillOpacity="0.500" />

      <g stroke={edge} strokeWidth="1.200" strokeLinejoin="round">
        {/* left petals */}
        <path d="M1009 558 978 572 951 583 927 595C921 598 918 600 920 601 930 602 955 597 967 593L982 587 1020 572V560z" fill="#8d9396" />
        <path d="M951 583 927 595C921 598 918 600 920 601 930 601 950 598 967 593 958 592 952 588 951 583z" fill="url(#petalL)" />
        <path d="M1020 572 982 588C967 596 948 611 944 619 944 622 950 621 953 620L1020 586 1032 579z" fill="#868b8e" />
        {/* right petals */}
        <path d="M1087 522 1155 487 1170 481C1175 479 1176 481 1174 484 1170 491 1158 500 1138 514L1120 523 1108 540 1095 535z" fill="#75797c" />
        <path d="M1113 508 1155 487C1156 492 1156 497 1153 502L1138 514 1120 523z" fill="url(#petalR)" stroke="none" />
        <path d="M1120 523 1138 514C1150 509 1190 498 1200 501 1201 505 1190 511 1187 512 1175 519 1145 532 1122 538 1123 532 1122 528 1120 523z" fill="url(#petalR2)" />
        <path d="M1155 487C1156 492 1156 497 1153 502M1111 543 1122 538M1113 508 1120 525" fill="none" />
        {/* bore */}
        <path d="M1015 572 1023 572C1050 573 1075 565 1098 552L1120 525C1120 532 1116 540 1111 543 1107 560 1098 568 1087 574 1072 582 1050 580 1028 579z" fill="url(#boreLow)" />
        <path d="M1010 553C1014 540 1025 529 1040 524 1055 521 1072 521 1087 522L1113 508C1118 516 1120 521 1120 525 1106 548 1066 574 1017 571z" fill="url(#bore)" stroke="none" />
        <path d="M1010 553C1014 540 1025 529 1040 524 1055 521 1072 521 1087 522M1120 525C1106 550 1066 574 1017 571M1010 553 1023 580M1008 559 1010 553M1020 539C1045 538 1065 530 1077 522M1087 522 1113 508 1120 525M1000 581 1020 571" fill="none" />
        {/* block edges */}
        <path d="M719 508 1204 279 1293 352 1346 472 861 701 773 628zM773 628 1258 400 1346 472M1258 400 1204 279" fill="none" stroke="#222" />
      </g>

      {/* plane outlines seen through the block */}
      <path d="M741 558 1251 318M927 410 1023 625" stroke="#4878b0" strokeOpacity="0.700" strokeWidth="1.500" />

      <circle cx="1015.500" cy="514.500" r="66.800" fill="#9ab0b8" fillOpacity="0.100" stroke={edge} strokeWidth="2" />
      <circle cx="1015.500" cy="514.500" r="3" fill="#111" />
      <circle cx="1059.500" cy="550.500" r="4.800" fill="#e8eef2" stroke={edge} strokeWidth="1.800" />
      <circle cx="1059.500" cy="550.500" r="1.600" fill="#111" />
      <path d="M979 441 986 438 988 454z" fill="#111" />
      <text transform="translate(965 442) rotate(-24)" fontFamily="'Open Sans', sans-serif" fontSize="17" fill="#111" stroke="#111" strokeWidth="0.300">Ø15</text>
    </svg>
  );
}

function ViewCube() {
  return (
    <svg viewBox="1695 80 162 162" className="absolute top-1.5 right-0 size-[162px]" aria-label="View cube">
      <g fill="#e2e9ef">
        <path d="M1776 89l7 10h-14zM1776 239l7-10h-14zM1701 164l10-7v14zM1851 164l-10-7v14z" />
        <path d="M1755 97 1756 103C1746 106 1737 112 1731 118L1734 122 1722 123 1722 111 1726 114C1734 106 1744 100 1755 97z" />
        <path d="M1797 97 1796 103C1806 106 1815 112 1821 118L1818 122 1830 123 1830 111 1826 114C1818 106 1808 100 1797 97z" />
        <path d="M1736 144 1781 123Q1792 121 1797 130L1820 181 1817 187 1764 204 1757 197 1735 152Q1733 146 1736 144z" />
      </g>
      <g fill="#fff">
        <path d="M1746 146 1775 134Q1784 132 1788 140L1797 162Q1799 171 1791 176L1767 186Q1758 188 1753 180L1743 156Q1741 149 1746 146z" />
        <ellipse cx="1741" cy="149" rx="6" ry="4" transform="rotate(-50 1741 149)" />
        <ellipse cx="1785" cy="129" rx="9" ry="4" transform="rotate(8 1785 129)" />
        <ellipse cx="1760" cy="192" rx="7" ry="5" transform="rotate(20 1760 192)" />
        <ellipse cx="1803" cy="173" rx="6" ry="7" />
        <path d="M1766 197 1806 180Q1813 180 1808 185L1772 201Q1765 202 1766 197z" />
      </g>
      <path d="M1771 198 1806 182" stroke="#222" strokeWidth="1.500" strokeDasharray="3 1.500" />
      <path d="M1801 146 1805 156" stroke="#999" strokeWidth="1" />
      <path d="M1820 182 1797 130" stroke="#2a2ac8" strokeWidth="1.400" />
      <path d="M1820 182 1768 207" stroke="#e01818" strokeWidth="1.400" />
      <path d="M1820 182 1811 174" stroke="#18a018" strokeWidth="1.400" />
      <g fontFamily="Roboto, sans-serif" fontSize="14" fontWeight="500">
        <text x="1789" y="125" fill="#2a2ae0">Z</text>
        <text x="1754" y="216" fill="#e01818">X</text>
        <text x="1804" y="178" fill="#18a018">Y</text>
        <text transform="translate(1760 169) rotate(-22)" fontSize="13" fontWeight="400" fill="#111">Back</text>
      </g>
    </svg>
  );
}

const sheets = [
  <><path d="M4 16 12 3l4 3 6 10z" fill="#888" stroke="none" /><path d="M11 6l3-3 4 4-4 4z" fill="#444" stroke="none" /><rect x="2" y="15" width="22" height="6" rx="2.500" fill="#fff" stroke="#666" /><path d="M9 15v6M5 17v2" /></>,
  <><path d="M14 7l9 3.500v8L16 22l-8-3.500v-8l8 3.500 7-3.500M16 14v8" strokeWidth="1.300" /><rect x="2" y="2.500" width="10" height="8" fill="#7fb4ea" stroke={BLUE} /><path d="M5.500 3v7M9 3v7M2 6.500h10" stroke={BLUE} /></>,
  <><path d="M16 8l6 3v6l-6 3-6-3v-6l6 3 6-3M16 14v6M5 12c-2 3-2 7 0 9" strokeWidth="1.300" /><rect x="2" y="2.500" width="10" height="8" fill="#bbb" /><path d="M5.500 3v7M9 3v7M2 6.500h10" /></>,
  <><path d="M10 18c5 2 4-8 9-8M10 10c5-1 4 9 9 8M5 11c-2 3-2 7 0 10" strokeWidth="2" /><rect x="2" y="2.500" width="10" height="8" fill="#bbb" /><path d="M5.500 3v7M9 3v7M2 6.500h10" /></>,
];
const sheetNames = ['Appearances', 'Configurations', 'Custom table', 'Variable table'];

function Canvas() {
  return (
    <main className="relative min-w-0 grow overflow-hidden bg-white">
      <Scene />
      <SketchDialog />
      <ViewCube />
      <button aria-label="View options" className="absolute top-[146px] right-[11px] flex items-center gap-2">
        <Icon className="size-5" box="0 0 20 20">
          <path d="M10 1.500 18 4v11l-8 4-8-4V4z" fill="#ccc" strokeWidth="1" />
          <path d="M2 4l8 3v12l-8-4z" fill="#909090" strokeWidth="1" />
          <path d="M10 7l8-3v11l-8 4z" fill="#d8d8d8" strokeWidth="1" />
        </Icon>
        <Icon className="h-2 w-2" box="0 0 8 8"><path d="M0 2h8L4 6z" fill="#333" stroke="none" /></Icon>
      </button>
      <button aria-label="Collapse feature list" className="absolute top-[395px] left-[-1px] flex h-[34px] w-8 items-center justify-center border border-l-0 border-[#aaa] bg-white">
        <Icon className="h-5 w-5" box="0 0 20 20"><path d="M2 1.500l3 2.500 3-2.500" strokeWidth="1.800" /><path d="M10 2.500h9M7 7.500h12M7 12.500h12M7 17.500h12" strokeWidth="1.300" /><path d="M4.500 7v12" stroke="#888" strokeWidth="1.800" /></Icon>
      </button>
      <div className="absolute top-[346px] right-0 flex w-[23px] flex-col border border-r-0 border-[#aaa] bg-white">
        {sheets.map((s, i) => (
          <button key={sheetNames[i]} aria-label={sheetNames[i]} className="flex h-[33px] items-center overflow-hidden border-b border-[#aaa] pl-[5px] last:border-b-0">
            <Icon className="h-5 w-5">{s}</Icon>
          </button>
        ))}
      </div>
      <div className="absolute bottom-[3px] left-[11px] flex h-6 items-center text-sm text-[#555]">
        <Icon className="h-[18px] w-[18px]" box="0 0 18 18">
          <path d="M0 7c5-6 13-6 18 0M2.500 10c4-5 9-5 13 0M5 13.500c2.500-3 5.500-3 8 0M7 16.500c1.500-1.500 2.500-1.500 4 0" stroke="#555" />
          <path d="M9 1.500v10M9 14v3" stroke="#fff" strokeWidth="5" />
          <path d="M7 2.500a2 2 0 0 1 4 0L10 12H8z" fill="#c4474f" stroke="none" />
          <circle cx="9" cy="15.500" r="1.900" fill="#c4474f" stroke="none" />
        </Icon>
        <span className="ml-1.5">Poor connection...</span>
      </div>
      <div className="absolute right-0 bottom-0 flex h-[30px] w-[101px] items-center gap-[15px] overflow-hidden bg-white/80 pl-2.5">
        <button aria-label="Measure" className="flex"><Icon className="h-4 w-5" box="1 3 22 18"><path d="M2 13h12M2 13v7h18l2-3V8c0-3-10-4-10 0 0 3 2 5 6 5" strokeWidth="1.500" /><ellipse cx="17" cy="8.500" rx="2.500" ry="1.500" /><path d="M6 20v-3M10 20v-3M14 20v-3M18 20v-3" strokeWidth="1.200" /></Icon></button>
        <button aria-label="Protractor" className="flex"><Icon className="h-4 w-5" box="1 4 22 18"><path d="M1.500 20v-3a10.500 10.500 0 0 1 21 0v3z" fill="#ccc" strokeWidth="1.600" /><path d="M7 16.500a5 5 0 0 1 10 0z" fill="#fff" strokeWidth="1.500" /></Icon></button>
        <button aria-label="Mass properties" className="flex"><Icon className="h-4 w-5" box="0 2 24 20"><path d="M3 4h18M10 4v15M14 4v15M6 5 3 14M6 5l3 9M18 5l-3 9M18 5l3 9" strokeWidth="1.500" /><path d="M2 14.500h8M14 14.500h8M3 20.500h18" strokeWidth="2.200" /></Icon></button>
      </div>
    </main>
  );
}

function Tabs() {
  return (
    <footer className="flex h-[25px] shrink-0 bg-[#d6d6d6] text-sm">
      <button aria-label="Insert new tab" className="flex w-[39px] items-center justify-center pr-1.5">
        <Icon className="mt-1 size-4" box="0 0 16 16"><path d="M.5 8h15M8 .5v15" stroke="#555" strokeWidth="2.400" /></Icon>
      </button>
      <a href="#part-studio" className="flex w-[200px] items-center bg-white pt-1 pl-[11px] text-[#333]">
        <Icon className="h-[18px] w-[18px]" box="0 0 18 18"><path d="M1.500 5.500 4 4h4v12.500H1.500zM1.500 5.500h4V16M5.500 5.500 8 4M10 1.500h3.500l3 3V17h-3L10 15zM10 1.500l3.500 3V17M13.500 4.500h3" strokeWidth="1.100" /></Icon>
        <span className="ml-1">Part Studio 1</span>
      </a>
      <a href="#assembly" className="ml-0.5 flex w-[200px] items-center bg-[#e9e9e9] pt-1 pl-[11px] text-[#777]">
        <Icon className="h-[18px] w-[18px]" box="0 0 18 18"><path d="M1 1.500 3 .5h12l2 3V17H5l-4-3z" fill="#fff" strokeWidth="1.400" /><path d="M1 1.500h10l3 3V13H5l-4-2z" fill="#8c8c8c" strokeWidth="1.200" /><path d="M1 1.500l4 3h9M5 4.500V17" strokeWidth="1.200" /></Icon>
        <span className="ml-1">Assembly 1</span>
      </a>
    </footer>
  );
}

export default function App() {
  return (
    <div className="flex h-screen flex-col overflow-hidden bg-white font-[Roboto,sans-serif]">
      <Header />
      <div className="flex min-h-0 grow">
        <Rail />
        <div className="flex min-w-0 grow flex-col">
          <Toolbar />
          <div className="flex min-h-0 grow">
            <FeaturePanel />
            <Canvas />
          </div>
          <Tabs />
        </div>
      </div>
    </div>
  );
}
